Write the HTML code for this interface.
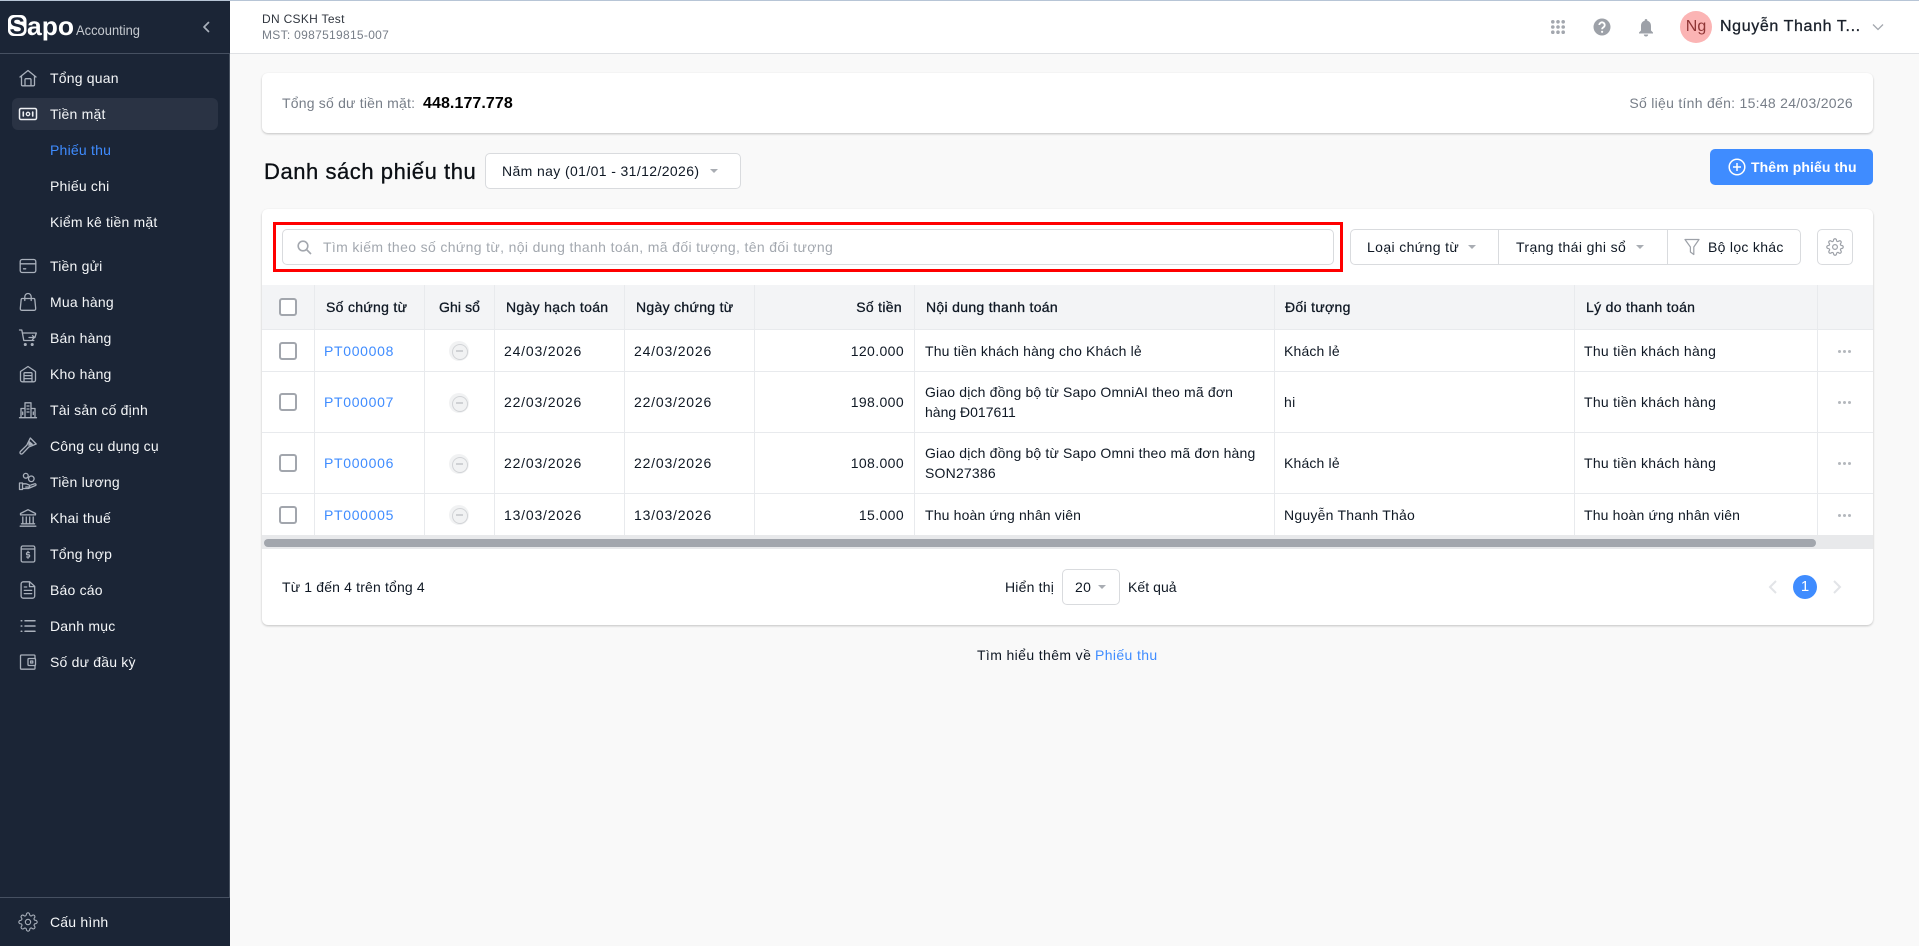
<!DOCTYPE html>
<html lang="vi"><head><meta charset="utf-8"><title>Danh sách phiếu thu</title>
<style>
*{box-sizing:border-box}
html,body{margin:0;padding:0;width:1919px;height:946px;overflow:hidden;background:#f9f9f9;font-family:"Liberation Sans","Noto Sans CJK SC",sans-serif;font-size:14px;color:#0f1824}
.a{position:absolute}
.t{position:absolute;line-height:20px;height:20px;white-space:nowrap;letter-spacing:.38px}
.m{-webkit-text-stroke:.3px currentColor;letter-spacing:.31px}
.s{color:#f4f6f8;left:50px;letter-spacing:.2px}
.ic{position:absolute;left:18px;width:20px;height:20px;fill:none;stroke:#a9b0bb;stroke-width:1.3;stroke-linecap:round;stroke-linejoin:round}
.g{color:#777e88}
.l{color:#3f8cff}
.p{color:#3f8cff;letter-spacing:.68px}
.d{letter-spacing:.8px}
.b{letter-spacing:.16px}
.v{position:absolute;width:1px;background:#e8eaed}
.h{position:absolute;height:1px;background:#e8eaed;left:262px;width:1611px}
.cb{position:absolute;left:279px;width:18px;height:18px;border:2px solid #a2a6ad;border-radius:3px;background:#fff}
.st{position:absolute;left:449px;width:20px;height:20px;border-radius:50%;background:#f1f2f3}
.st:after{content:"";position:absolute;left:3px;top:3px;width:14px;height:14px;border:1.4px solid #d2d4d7;border-radius:50%}
.st:before{content:"";position:absolute;left:6.500px;top:9.400px;width:7px;height:1.300px;background:#cfd1d4}
.dots{position:absolute;left:1838px;width:14px;height:4px}
.dots i{position:absolute;top:0;width:3px;height:3px;border-radius:50%;background:#b4b8bd}
.car{position:absolute;width:0;height:0;border-left:4px solid transparent;border-right:4px solid transparent;border-top:4px solid #a9adb3}
.card{position:absolute;left:262px;width:1611px;background:#fff;border-radius:6px;box-shadow:0 1px 2px rgba(0,0,0,.22)}
</style></head><body>

<!-- top + header -->
<div class="a" style="left:230px;top:0;width:1689px;height:54px;background:#fff;border-bottom:1px solid #dfe1e4"></div>
<div class="a" style="left:0;top:0;width:1919px;height:1px;background:#b7c5d6;z-index:5"></div>

<!-- sidebar -->
<div class="a" style="left:0;top:0;width:230px;height:946px;background:#1b2536"></div>
<div class="a" style="left:229px;top:54px;width:1px;height:843px;background:#46505f"></div>
<div class="a" style="left:0;top:53px;width:230px;height:1px;background:#465061"></div>
<div class="a" style="left:0;top:897px;width:230px;height:1px;background:#465061"></div>
<div class="a" style="left:12px;top:98px;width:206px;height:32px;border-radius:6px;background:#2a3344"></div>

<svg class="a" style="left:0;top:5px" width="150" height="44">
<rect x="8" y="10" width="18.500" height="21" rx="5.500" fill="#fff"/>
<text x="9.500" y="29" font-family="Liberation Sans" font-weight="700" font-size="24" fill="#1b2536" textLength="15.500" lengthAdjust="spacingAndGlyphs">S</text>
<text x="27" y="30" font-family="Liberation Sans" font-weight="700" font-size="26" fill="#fff" textLength="47" lengthAdjust="spacingAndGlyphs">apo</text>
<text x="76" y="30" font-family="Liberation Sans" font-size="14" fill="#c6cad0" textLength="64" lengthAdjust="spacingAndGlyphs">Accounting</text>
</svg>
<svg class="a" style="left:200px;top:20px" width="12" height="14" fill="none" stroke="#a9b0bb" stroke-width="1.700" stroke-linecap="round" stroke-linejoin="round"><path d="M8.500 2.500 4 7l4.500 4.500"/></svg>

<svg class="ic" style="top:68px" viewBox="0 0 20 20"><path d="M2 9 10 2.500 18 9M3.500 8v8.800a1 1 0 0 0 1 1h11a1 1 0 0 0 1-1V8M7 17.800v-6.300a.8.8 0 0 1 .8-.8h4.400a.8.8 0 0 1 .8.8v6.300"/></svg>
<span class="t s" style="top:68px">Tổng quan</span>

<svg class="ic" style="top:104px;stroke:#eef0f3" viewBox="0 0 20 20"><rect x="1.500" y="4.500" width="17" height="11" rx="1.500" stroke-width="1.500"/><circle cx="10" cy="10" r="1.700"/><path d="M5.300 8v4M14.700 8v4" stroke-width="1.600"/></svg>
<span class="t s" style="top:104px">Tiền mặt</span>

<span class="t l" style="left:50px;top:140px;letter-spacing:.22px">Phiếu thu</span>
<span class="t s" style="top:176px">Phiếu chi</span>
<span class="t s" style="top:212px">Kiểm kê tiền mặt</span>

<svg class="ic" style="top:256px" viewBox="0 0 20 20"><rect x="2.200" y="3.500" width="15.600" height="13" rx="2"/><path d="M2.200 7.800h15.600M5.500 12.800h2.200"/></svg>
<span class="t s" style="top:256px">Tiền gửi</span>

<svg class="ic" style="top:292px" viewBox="0 0 20 20"><path d="M4.200 6.500h11.600a1 1 0 0 1 1 .9l.9 9.200a1.500 1.500 0 0 1-1.500 1.700H3.800a1.500 1.500 0 0 1-1.500-1.700l.9-9.200a1 1 0 0 1 1-.9zM6.800 8.500V4.700a3.200 3.200 0 0 1 6.400 0v3.800"/></svg>
<span class="t s" style="top:292px">Mua hàng</span>

<svg class="ic" style="top:328px" viewBox="0 0 20 20"><path d="M1.500 2h2.300l2 10.500h10M4.300 5h14l-1.400 4.500M11 9.500h5.200M14.500 7.600l1.900 1.900-1.900 1.900"/><circle cx="7.300" cy="16.500" r=".9" fill="#a9b0bb"/><circle cx="14.200" cy="16.500" r=".9" fill="#a9b0bb"/></svg>
<span class="t s" style="top:328px">Bán hàng</span>

<svg class="ic" style="top:364px" viewBox="0 0 20 20"><path d="M2.500 7.500 10 2.500l7.500 5V16a1.800 1.800 0 0 1-1.800 1.800H4.300A1.800 1.800 0 0 1 2.500 16z"/><path d="M6 17.800V9.500a.8.8 0 0 1 .8-.8h6.400a.8.8 0 0 1 .8.8v8.300M6 11.600h8M6 14.600h8"/></svg>
<span class="t s" style="top:364px">Kho hàng</span>

<svg class="ic" style="top:400px" viewBox="0 0 20 20"><path d="M1.500 17.700h17M7 17.700V2.800h6v14.900M7 8.500H3v9.200M13 8.500h4v9.200M9 6h2M9 9h2M9 12h2M4.700 12v2.500M15.300 12v2.500"/></svg>
<span class="t s" style="top:400px">Tài sản cố định</span>

<svg class="ic" style="top:436px" viewBox="0 0 20 20"><path d="M12.300 2 18.200 8 10.800 11 4.600 17.600a1.500 1.500 0 0 1-2.200-2.100L8.800 9.200z"/><path d="M11.400 5.800l2.900 2.400-3.400 1z" fill="#a9b0bb"/></svg>
<span class="t s" style="top:436px">Công cụ dụng cụ</span>

<svg class="ic" style="top:472px" viewBox="0 0 20 20"><circle cx="7.800" cy="3.800" r="2.400"/><circle cx="13.300" cy="6.800" r="2.800"/><path d="M1.500 11h3v6.500h-3zM4.500 11.800h3.600l3 1.200c1.300.6.6 2.300-.8 2H7.800M4.500 16.500h5.800l7.200-3c1-.5.4-1.900-.6-1.700l-4 1.200"/></svg>
<span class="t s" style="top:472px">Tiền lương</span>

<svg class="ic" style="top:508px" viewBox="0 0 20 20"><path d="M10 1.700 2.500 5.500v1.400h15V5.500zM4.800 9v6.500M8.300 9v6.500M11.700 9v6.500M15.200 9v6.500M3.400 15.800h13.200M2.200 18.200h15.600"/></svg>
<span class="t s" style="top:508px">Khai thuế</span>

<svg class="ic" style="top:544px" viewBox="0 0 20 20"><rect x="3.200" y="2" width="13.600" height="16" rx="1.500"/><path d="M3.200 5h13.600M11.300 8.600H9.600a1 1 0 0 0 0 2.200h.9a1 1 0 0 1 0 2.200H8.700M10 7.400v1.200M10 13v1.200"/></svg>
<span class="t s" style="top:544px">Tổng hợp</span>

<svg class="ic" style="top:580px" viewBox="0 0 20 20"><path d="M5.300 1.800h6.400l5 4.600V16a2.200 2.200 0 0 1-2.200 2.200H5.300A2.200 2.200 0 0 1 3.100 16V4a2.200 2.200 0 0 1 2.200-2.200zM11.500 2v4.600h5M6.300 7h2.400M6.300 10.400h7.400M6.300 13.600h7.400"/></svg>
<span class="t s" style="top:580px">Báo cáo</span>

<svg class="ic" style="top:616px" viewBox="0 0 20 20"><path d="M7 4.800h10M7 10h10M7 15.200h10M3.200 4.800h.6M3.200 10h.6M3.200 15.200h.6" stroke-width="1.500"/></svg>
<span class="t s" style="top:616px">Danh mục</span>

<svg class="ic" style="top:652px" viewBox="0 0 20 20"><path d="M17 6.500V4a1 1 0 0 0-1-1H3.500a1 1 0 0 0-1 1v12.200a1 1 0 0 0 1 1H16a1 1 0 0 0 1-1v-2.700"/><rect x="10" y="6.500" width="7.500" height="7" rx="1"/><rect x="12.600" y="9" width="2.200" height="2"/></svg>
<span class="t s" style="top:652px">Số dư đầu kỳ</span>

<svg class="ic" style="top:912px" viewBox="0 0 24 24" stroke-width="1.500"><circle cx="12" cy="12" r="3.200"/><path d="M19.400 15a1.650 1.650 0 0 0 .33 1.820l.06.06a2 2 0 0 1 0 2.830 2 2 0 0 1-2.830 0l-.06-.06a1.650 1.650 0 0 0-1.820-.33 1.650 1.650 0 0 0-1 1.510V21a2 2 0 0 1-2 2 2 2 0 0 1-2-2v-.09A1.650 1.650 0 0 0 9 19.400a1.650 1.650 0 0 0-1.820.33l-.06.06a2 2 0 0 1-2.830 0 2 2 0 0 1 0-2.830l.06-.06a1.650 1.650 0 0 0 .33-1.820 1.650 1.650 0 0 0-1.510-1H3a2 2 0 0 1-2-2 2 2 0 0 1 2-2h.09A1.650 1.650 0 0 0 4.600 9a1.650 1.650 0 0 0-.33-1.820l-.06-.06a2 2 0 0 1 0-2.830 2 2 0 0 1 2.830 0l.06.06a1.650 1.650 0 0 0 1.820.33H9a1.650 1.650 0 0 0 1-1.510V3a2 2 0 0 1 2-2 2 2 0 0 1 2 2v.09a1.650 1.650 0 0 0 1 1.510 1.650 1.650 0 0 0 1.820-.33l.06-.06a2 2 0 0 1 2.830 0 2 2 0 0 1 0 2.830l-.06.06a1.650 1.650 0 0 0-.33 1.820V9a1.650 1.650 0 0 0 1.510 1H21a2 2 0 0 1 2 2 2 2 0 0 1-2 2h-.09a1.650 1.650 0 0 0-1.510 1z"/></svg>
<span class="t s" style="top:912px">Cấu hình</span>

<!-- header content -->
<span class="t" style="left:262px;top:9px;font-size:12px;letter-spacing:.3px;color:#30363f">DN CSKH Test</span>
<span class="t g" style="left:262px;top:25px;font-size:12px;letter-spacing:.3px">MST: 0987519815-007</span>

<svg class="a" style="left:1551px;top:20px" width="14" height="14" fill="#a3a7ae"><circle cx="1.800" cy="1.800" r="1.800"/><circle cx="7" cy="1.800" r="1.800"/><circle cx="12.200" cy="1.800" r="1.800"/><circle cx="1.800" cy="7" r="1.800"/><circle cx="7" cy="7" r="1.800"/><circle cx="12.200" cy="7" r="1.800"/><circle cx="1.800" cy="12.200" r="1.800"/><circle cx="7" cy="12.200" r="1.800"/><circle cx="12.200" cy="12.200" r="1.800"/></svg>
<svg class="a" style="left:1593px;top:18px" width="18" height="18" viewBox="0 0 18 18"><circle cx="9" cy="9" r="8.500" fill="#9da1a8"/><path d="M6.300 7a2.700 2.700 0 1 1 4.200 2.300c-.9.6-1.400 1-1.400 2" fill="none" stroke="#fff" stroke-width="1.800"/><circle cx="9.100" cy="13.800" r="1.100" fill="#fff"/></svg>
<svg class="a" style="left:1638px;top:18px" width="16" height="19" viewBox="0 0 16 19" fill="#9da1a8"><path d="M8 1a1.300 1.300 0 0 1 1.300 1.300v.4C11.800 3.300 13 5.300 13 8v4.500l2 2V15.500H1v-1l2-2V8c0-2.700 1.200-4.700 3.700-5.300v-.4A1.300 1.300 0 0 1 8 1zM5.800 16.500h4.400A2.200 2.200 0 0 1 8 18.500a2.200 2.200 0 0 1-2.200-2z"/></svg>
<div class="a" style="left:1680px;top:11px;width:32px;height:32px;border-radius:50%;background:#fbb4b4;color:#8f3535;font-size:16px;line-height:32px;text-align:center">Ng</div>
<span class="t m" style="left:1720px;top:17px;font-size:16px;letter-spacing:.62px;color:#1a212b">Nguyễn Thanh T...</span>
<svg class="a" style="left:1872px;top:23px" width="12" height="8" fill="none" stroke="#a3a7ae" stroke-width="1.300"><path d="M1 1.500 6 6.500l5-5"/></svg>

<!-- balance card -->
<div class="card" style="top:73px;height:60px"></div>
<span class="t g" style="left:282px;top:93px;letter-spacing:.2px">Tổng số dư tiền mặt:</span>
<span class="t" style="left:423px;top:94px;font-size:16px;font-weight:700;letter-spacing:.08px;color:#000">448.177.778</span>
<span class="t g" style="right:66px;top:93px;letter-spacing:.28px">Số liệu tính đến: 15:48 24/03/2026</span>

<!-- title -->
<span class="t m" style="left:264px;top:162px;font-size:22px;letter-spacing:.55px;color:#0b0f14">Danh sách phiếu thu</span>
<div class="a" style="left:485px;top:153px;width:256px;height:36px;background:#fff;border:1px solid #d9dbde;border-radius:5px"></div>
<span class="t" style="left:502px;top:161px">Năm nay (01/01 - 31/12/2026)</span>
<div class="car" style="left:710px;top:169px"></div>

<div class="a" style="left:1710px;top:149px;width:163px;height:36px;background:#3f8cff;border-radius:5px"></div>
<svg class="a" style="left:1728px;top:158px" width="18" height="18" fill="none" stroke="#fff" stroke-width="1.500"><circle cx="9" cy="9" r="7.800"/><path d="M9 5v8M5 9h8"/></svg>
<span class="t" style="left:1751px;top:157px;color:#fff;font-weight:700;letter-spacing:.1px;font-size:14px">Thêm phiếu thu</span>

<!-- main card -->
<div class="card" style="top:209px;height:416px"></div>

<div class="a" style="left:273px;top:222px;width:1070px;height:50px;border:3px solid #f00"></div>
<div class="a" style="left:282px;top:229px;width:1052px;height:36px;background:#fff;border:1px solid #d9dbde;border-radius:5px"></div>
<svg class="a" style="left:296px;top:239px" width="17" height="17" fill="none" stroke="#a3a7ae" stroke-width="1.600"><circle cx="7" cy="7" r="4.800"/><path d="M10.500 10.500 15 15"/></svg>
<span class="t" style="left:323px;top:237px;color:#a3a8af;letter-spacing:.36px">Tìm kiếm theo số chứng từ, nội dung thanh toán, mã đối tượng, tên đối tượng</span>

<div class="a" style="left:1350px;top:229px;width:451px;height:36px;background:#fff;border:1px solid #d9dbde;border-radius:5px"></div>
<div class="a" style="left:1498px;top:229px;width:1px;height:36px;background:#d9dbde"></div>
<div class="a" style="left:1667px;top:229px;width:1px;height:36px;background:#d9dbde"></div>
<span class="t" style="left:1367px;top:237px">Loại chứng từ</span><div class="car" style="left:1468px;top:245px"></div>
<span class="t" style="left:1516px;top:237px">Trạng thái ghi sổ</span><div class="car" style="left:1636px;top:245px"></div>
<svg class="a" style="left:1684px;top:238px" width="16" height="18" fill="none" stroke="#9da1a8" stroke-width="1.200" stroke-linejoin="round"><path d="M1 1.500h14L9.800 9v7.500L6.400 14V9z"/></svg>
<span class="t" style="left:1708px;top:237px;letter-spacing:.3px">Bộ lọc khác</span>
<div class="a" style="left:1817px;top:229px;width:36px;height:36px;background:#fff;border:1px solid #d9dbde;border-radius:5px"></div>
<svg class="a" style="left:1826px;top:238px" width="18" height="18" viewBox="0 0 24 24" fill="none" stroke="#9da1a8" stroke-width="1.600"><circle cx="12" cy="12" r="3.200"/><path d="M19.400 15a1.650 1.650 0 0 0 .33 1.820l.06.06a2 2 0 0 1 0 2.830 2 2 0 0 1-2.830 0l-.06-.06a1.650 1.650 0 0 0-1.820-.33 1.650 1.650 0 0 0-1 1.510V21a2 2 0 0 1-2 2 2 2 0 0 1-2-2v-.09A1.650 1.650 0 0 0 9 19.400a1.650 1.650 0 0 0-1.820.33l-.06.06a2 2 0 0 1-2.830 0 2 2 0 0 1 0-2.830l.06-.06a1.650 1.650 0 0 0 .33-1.820 1.650 1.650 0 0 0-1.510-1H3a2 2 0 0 1-2-2 2 2 0 0 1 2-2h.09A1.650 1.650 0 0 0 4.600 9a1.650 1.650 0 0 0-.33-1.820l-.06-.06a2 2 0 0 1 0-2.830 2 2 0 0 1 2.830 0l.06.06a1.650 1.650 0 0 0 1.820.33H9a1.650 1.650 0 0 0 1-1.510V3a2 2 0 0 1 2-2 2 2 0 0 1 2 2v.09a1.650 1.650 0 0 0 1 1.510 1.650 1.650 0 0 0 1.820-.33l.06-.06a2 2 0 0 1 2.830 0 2 2 0 0 1 0 2.830l-.06.06a1.650 1.650 0 0 0-.33 1.820V9a1.650 1.650 0 0 0 1.510 1H21a2 2 0 0 1 2 2 2 2 0 0 1-2 2h-.09a1.650 1.650 0 0 0-1.510 1z"/></svg>

<!-- table -->
<div class="a" style="left:262px;top:285px;width:1611px;height:44px;background:#f3f4f6"></div>
<div class="h" style="top:329px"></div><div class="h" style="top:371px"></div><div class="h" style="top:432px"></div><div class="h" style="top:493px"></div>
<div class="v" style="left:314px;top:285px;height:250px"></div>
<div class="v" style="left:424px;top:285px;height:250px"></div>
<div class="v" style="left:494px;top:285px;height:250px"></div>
<div class="v" style="left:624px;top:285px;height:250px"></div>
<div class="v" style="left:754px;top:285px;height:250px"></div>
<div class="v" style="left:914px;top:285px;height:250px"></div>
<div class="v" style="left:1274px;top:285px;height:250px"></div>
<div class="v" style="left:1574px;top:285px;height:250px"></div>
<div class="v" style="left:1817px;top:285px;height:250px"></div>

<div class="cb" style="top:298px"></div>
<span class="t m" style="left:326px;top:297px">Số chứng từ</span>
<span class="t m" style="left:439px;top:297px;letter-spacing:.1px">Ghi sổ</span>
<span class="t m" style="left:506px;top:297px">Ngày hạch toán</span>
<span class="t m" style="left:636px;top:297px">Ngày chứng từ</span>
<span class="t m" style="right:1017px;top:297px">Số tiền</span>
<span class="t m" style="left:926px;top:297px">Nội dung thanh toán</span>
<span class="t m" style="left:1285px;top:297px">Đối tượng</span>
<span class="t m" style="left:1586px;top:297px">Lý do thanh toán</span>

<!-- row 1 -->
<div class="cb" style="top:342px"></div><span class="t p" style="left:324px;top:341px">PT000008</span><div class="st" style="top:341px"></div>
<span class="t d" style="left:504px;top:341px">24/03/2026</span><span class="t d" style="left:634px;top:341px">24/03/2026</span><span class="t" style="right:1015px;top:341px">120.000</span>
<span class="t b" style="left:925px;top:341px">Thu tiền khách hàng cho Khách lẻ</span><span class="t b" style="left:1284px;top:341px">Khách lẻ</span><span class="t" style="left:1584px;top:341px;letter-spacing:.28px">Thu tiền khách hàng</span>
<div class="dots" style="top:350px"><i style="left:0"></i><i style="left:5px"></i><i style="left:10px"></i></div>
<!-- row 2 -->
<div class="cb" style="top:393px"></div><span class="t p" style="left:324px;top:392px">PT000007</span><div class="st" style="top:393px"></div>
<span class="t d" style="left:504px;top:392px">22/03/2026</span><span class="t d" style="left:634px;top:392px">22/03/2026</span><span class="t" style="right:1015px;top:392px">198.000</span>
<span class="t b" style="left:925px;top:382px">Giao dịch đồng bộ từ Sapo OmniAI theo mã đơn</span><span class="t" style="left:925px;top:402px;letter-spacing:0">hàng Đ017611</span><span class="t" style="left:1284px;top:392px">hi</span><span class="t" style="left:1584px;top:392px;letter-spacing:.28px">Thu tiền khách hàng</span>
<div class="dots" style="top:401px"><i style="left:0"></i><i style="left:5px"></i><i style="left:10px"></i></div>
<!-- row 3 -->
<div class="cb" style="top:454px"></div><span class="t p" style="left:324px;top:453px">PT000006</span><div class="st" style="top:454px"></div>
<span class="t d" style="left:504px;top:453px">22/03/2026</span><span class="t d" style="left:634px;top:453px">22/03/2026</span><span class="t" style="right:1015px;top:453px">108.000</span>
<span class="t b" style="left:925px;top:443px">Giao dịch đồng bộ từ Sapo Omni theo mã đơn hàng</span><span class="t" style="left:925px;top:463px;letter-spacing:.2px">SON27386</span><span class="t b" style="left:1284px;top:453px">Khách lẻ</span><span class="t" style="left:1584px;top:453px;letter-spacing:.28px">Thu tiền khách hàng</span>
<div class="dots" style="top:462px"><i style="left:0"></i><i style="left:5px"></i><i style="left:10px"></i></div>
<!-- row 4 -->
<div class="cb" style="top:506px"></div><span class="t p" style="left:324px;top:505px">PT000005</span><div class="st" style="top:505px"></div>
<span class="t d" style="left:504px;top:505px">13/03/2026</span><span class="t d" style="left:634px;top:505px">13/03/2026</span><span class="t" style="right:1015px;top:505px">15.000</span>
<span class="t b" style="left:925px;top:505px">Thu hoàn ứng nhân viên</span><span class="t" style="left:1284px;top:505px;letter-spacing:.23px">Nguyễn Thanh Thảo</span><span class="t b" style="left:1584px;top:505px">Thu hoàn ứng nhân viên</span>
<div class="dots" style="top:514px"><i style="left:0"></i><i style="left:5px"></i><i style="left:10px"></i></div>

<!-- scrollbar -->
<div class="a" style="left:262px;top:535px;width:1611px;height:14px;background:#e8e9eb"></div>
<div class="a" style="left:264px;top:539px;width:1552px;height:8px;background:#a2a6ad;border-radius:4px"></div>

<!-- footer -->
<span class="t" style="left:282px;top:577px;letter-spacing:.16px">Từ 1 đến 4 trên tổng 4</span>
<span class="t" style="left:1005px;top:577px;letter-spacing:.2px">Hiển thị</span>
<div class="a" style="left:1062px;top:569px;width:58px;height:36px;background:#fff;border:1px solid #d9dbde;border-radius:5px"></div>
<span class="t" style="left:1075px;top:577px">20</span><div class="car" style="left:1098px;top:585px"></div>
<span class="t" style="left:1128px;top:577px;letter-spacing:.05px">Kết quả</span>
<svg class="a" style="left:1767px;top:579px" width="12" height="16" fill="none" stroke="#e2e4e7" stroke-width="2"><path d="M9 2 3 8l6 6"/></svg>
<div class="a" style="left:1793px;top:575px;width:24px;height:24px;border-radius:50%;background:#3f8cff;color:#fff;text-align:center;line-height:24px;font-size:15px">1</div>
<svg class="a" style="left:1831px;top:579px" width="12" height="16" fill="none" stroke="#e2e4e7" stroke-width="2"><path d="M3 2l6 6-6 6"/></svg>

<span class="t" style="left:977px;top:645px">Tìm hiểu thêm về</span>
<span class="t l" style="left:1095px;top:645px">Phiếu thu</span>

</body></html>
